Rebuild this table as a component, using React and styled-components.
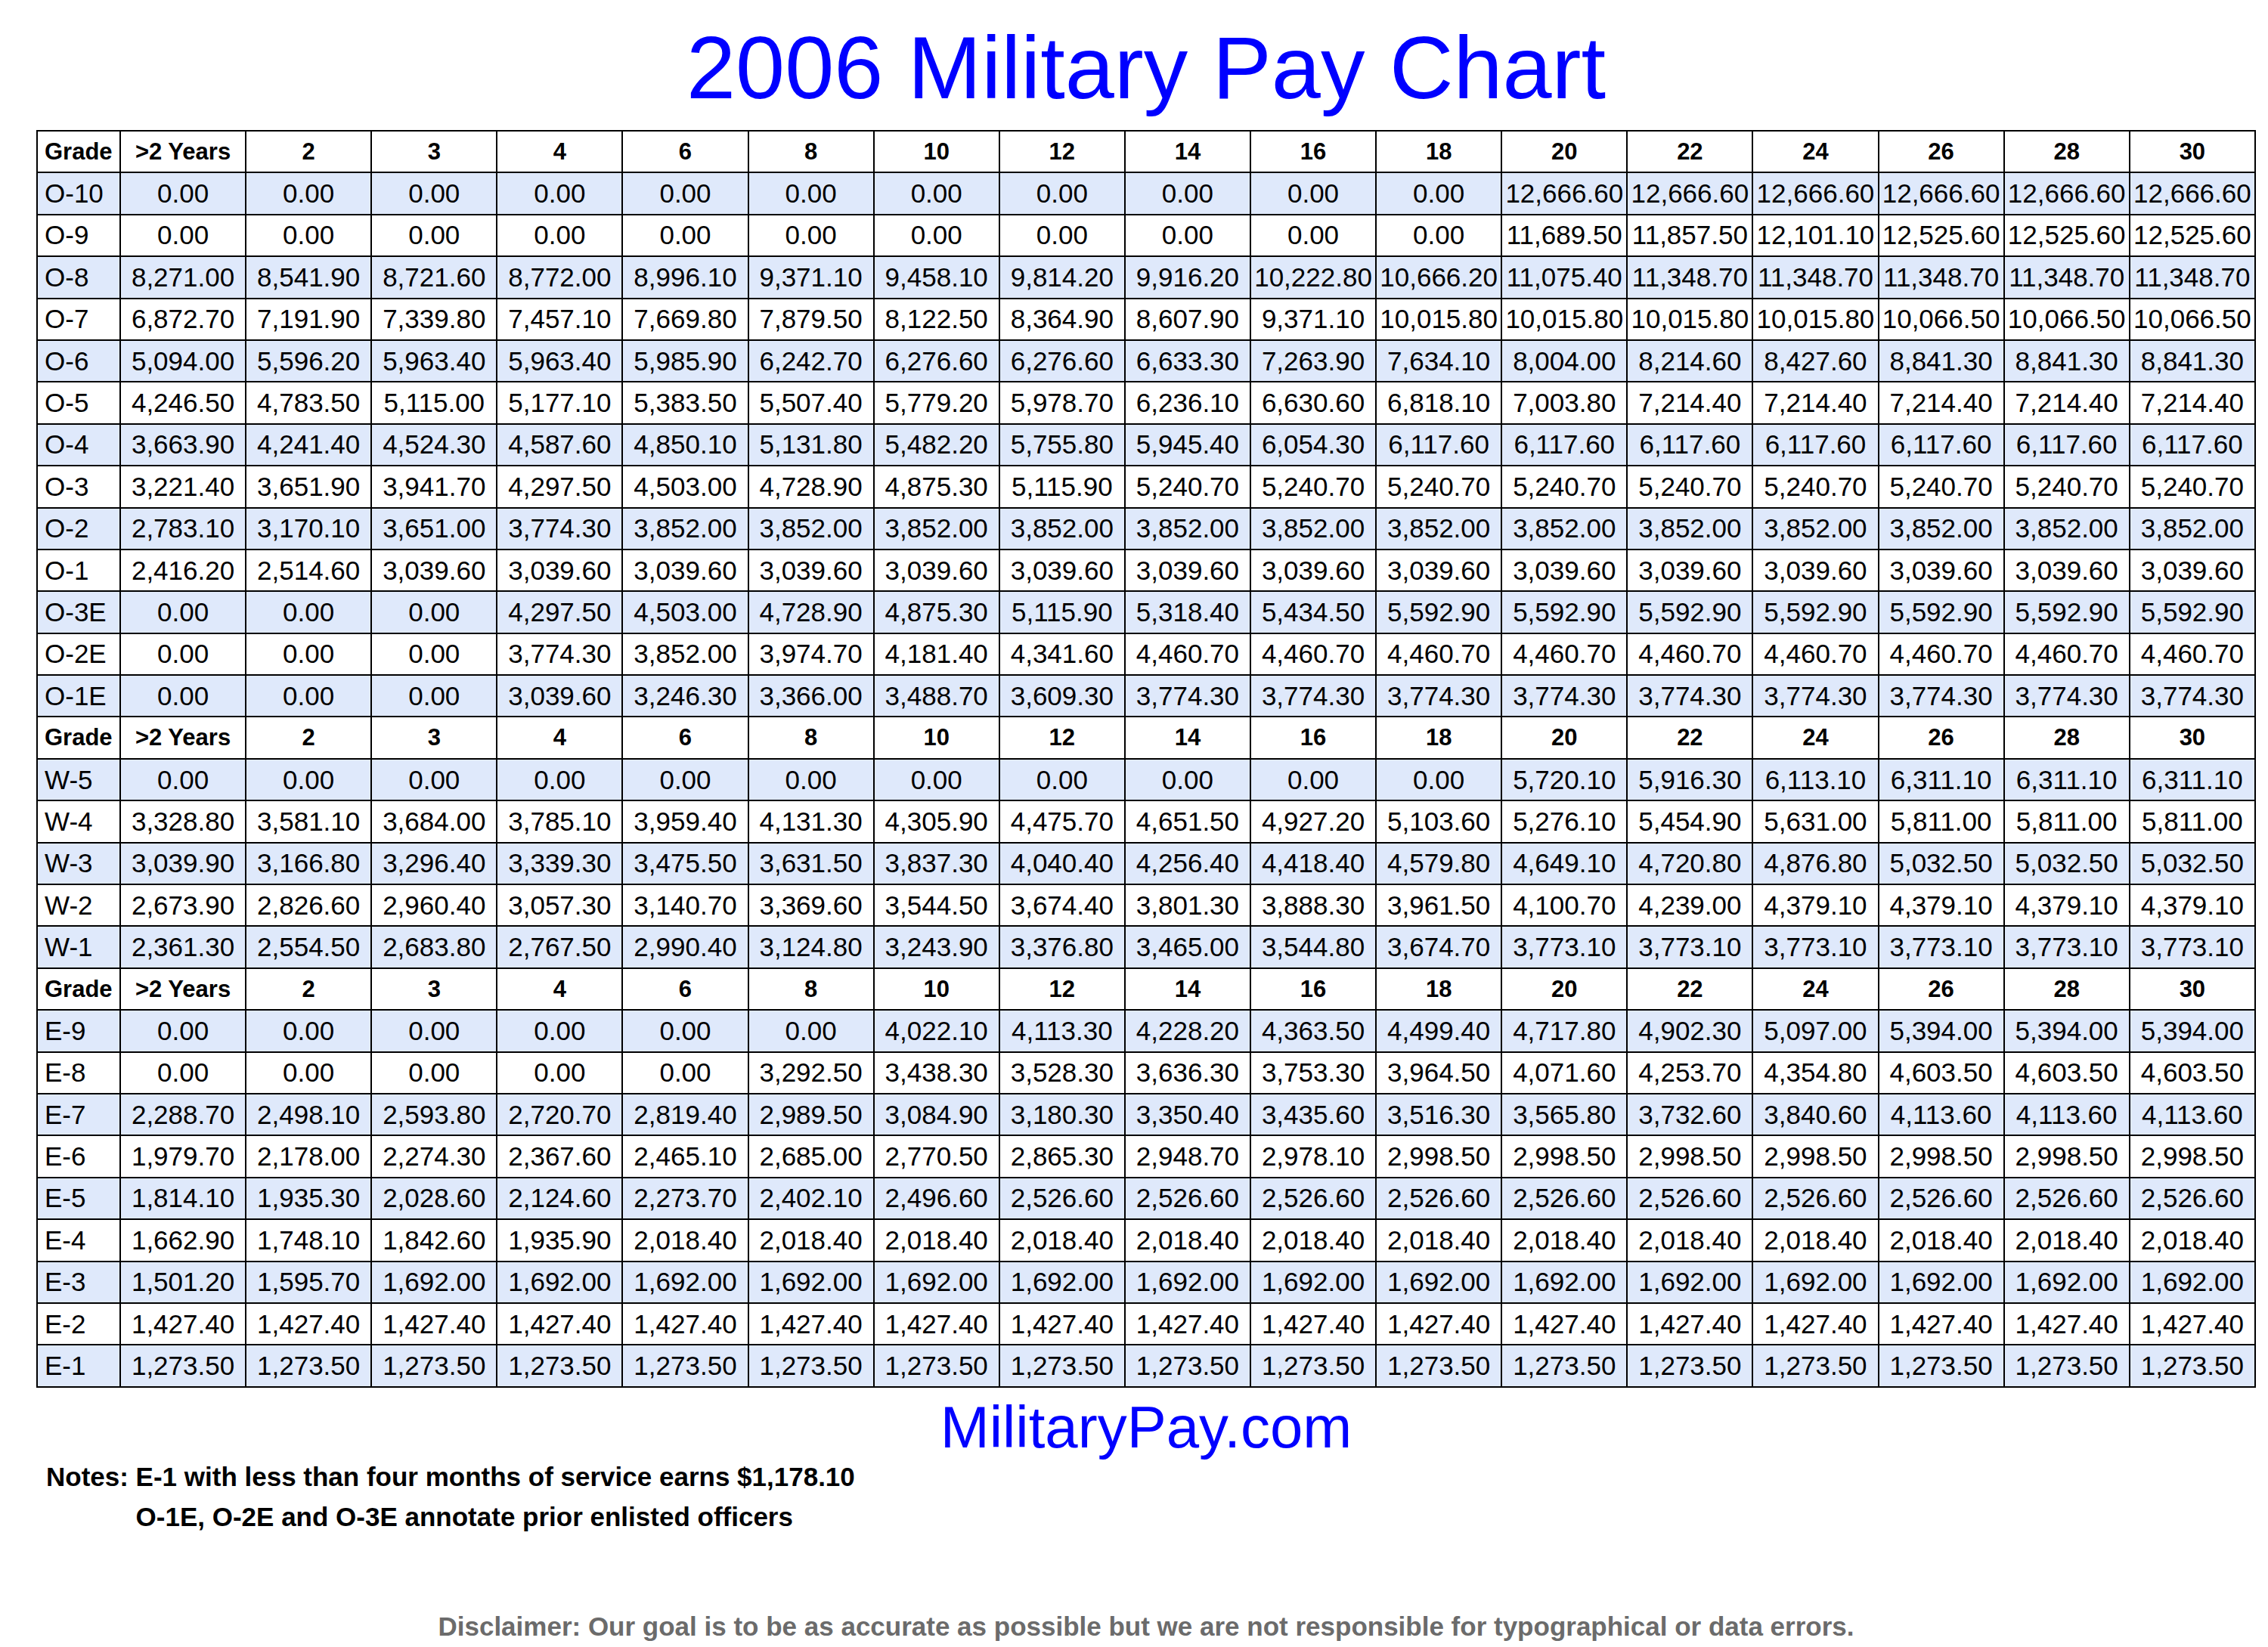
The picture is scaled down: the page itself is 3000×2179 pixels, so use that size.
import styled, { createGlobalStyle } from 'styled-components';

const GlobalStyle = createGlobalStyle`
  body {
    margin: 0;
    background: #ffffff;
    font-family: "Liberation Sans", Arial, sans-serif;
    color: #000000;
  }
`;

const Page = styled.div`
  width: 2936px;
  margin-left: 48px;
  display: flex;
  flex-direction: column;
`;

const Title = styled.h1`
  margin: 31px 0 0;
  font-size: 117px;
  line-height: 117px;
  font-weight: 400;
  color: #0000ff;
  text-align: center;
`;

const Chart = styled.table`
  margin-top: 24px;
  width: 100%;
  table-layout: fixed;
  border-collapse: collapse;
  border: 2px solid #000;
`;

const GradeCol = styled.col`
  width: 110px;
`;

const Cell = styled.td`
  height: 53.4px;
  padding: 0 2px;
  border: 2px solid #000;
  white-space: nowrap;
  vertical-align: middle;
  text-align: ${({ $left }) => ($left ? 'left' : 'center')};
  padding-left: ${({ $left }) => ($left ? '9px' : '2px')};
  font-size: ${({ $head }) => ($head ? '31px' : '35px')};
  font-weight: ${({ $head }) => ($head ? 700 : 400)};
  background: ${({ $shaded }) => ($shaded ? '#dfe9fb' : '#ffffff')};
`;

const Site = styled.div`
  margin-top: 13px;
  font-size: 78px;
  line-height: 78px;
  color: #0000ff;
  text-align: center;
`;

const Notes = styled.div`
  margin-top: 0;
  padding-left: 13px;
  display: flex;
  gap: 9.7px;
  font-size: 35px;
  line-height: 53px;
  font-weight: 700;
`;

const NoteLines = styled.div`
  display: flex;
  flex-direction: column;
`;

const Disclaimer = styled.div`
  margin-top: 99px;
  font-size: 35px;
  line-height: 40px;
  font-weight: 700;
  color: #6b6b6b;
  text-align: center;
`;

const YEARS = ['>2 Years', '2', '3', '4', '6', '8', '10', '12', '14', '16', '18', '20', '22', '24', '26', '28', '30'];

const rep = (v, n) => Array(n).fill(v);

const groups = [
  [
    ['O-10', [...rep('0.00', 11), ...rep('12,666.60', 6)]],
    ['O-9', [...rep('0.00', 11), '11,689.50', '11,857.50', '12,101.10', ...rep('12,525.60', 3)]],
    ['O-8', ['8,271.00', '8,541.90', '8,721.60', '8,772.00', '8,996.10', '9,371.10', '9,458.10', '9,814.20', '9,916.20', '10,222.80', '10,666.20', '11,075.40', ...rep('11,348.70', 5)]],
    ['O-7', ['6,872.70', '7,191.90', '7,339.80', '7,457.10', '7,669.80', '7,879.50', '8,122.50', '8,364.90', '8,607.90', '9,371.10', ...rep('10,015.80', 4), ...rep('10,066.50', 3)]],
    ['O-6', ['5,094.00', '5,596.20', '5,963.40', '5,963.40', '5,985.90', '6,242.70', '6,276.60', '6,276.60', '6,633.30', '7,263.90', '7,634.10', '8,004.00', '8,214.60', '8,427.60', ...rep('8,841.30', 3)]],
    ['O-5', ['4,246.50', '4,783.50', '5,115.00', '5,177.10', '5,383.50', '5,507.40', '5,779.20', '5,978.70', '6,236.10', '6,630.60', '6,818.10', '7,003.80', ...rep('7,214.40', 5)]],
    ['O-4', ['3,663.90', '4,241.40', '4,524.30', '4,587.60', '4,850.10', '5,131.80', '5,482.20', '5,755.80', '5,945.40', '6,054.30', ...rep('6,117.60', 7)]],
    ['O-3', ['3,221.40', '3,651.90', '3,941.70', '4,297.50', '4,503.00', '4,728.90', '4,875.30', '5,115.90', ...rep('5,240.70', 9)]],
    ['O-2', ['2,783.10', '3,170.10', '3,651.00', '3,774.30', ...rep('3,852.00', 13)]],
    ['O-1', ['2,416.20', '2,514.60', ...rep('3,039.60', 15)]],
    ['O-3E', [...rep('0.00', 3), '4,297.50', '4,503.00', '4,728.90', '4,875.30', '5,115.90', '5,318.40', '5,434.50', ...rep('5,592.90', 7)]],
    ['O-2E', [...rep('0.00', 3), '3,774.30', '3,852.00', '3,974.70', '4,181.40', '4,341.60', ...rep('4,460.70', 9)]],
    ['O-1E', [...rep('0.00', 3), '3,039.60', '3,246.30', '3,366.00', '3,488.70', '3,609.30', ...rep('3,774.30', 9)]],
  ],
  [
    ['W-5', [...rep('0.00', 11), '5,720.10', '5,916.30', '6,113.10', ...rep('6,311.10', 3)]],
    ['W-4', ['3,328.80', '3,581.10', '3,684.00', '3,785.10', '3,959.40', '4,131.30', '4,305.90', '4,475.70', '4,651.50', '4,927.20', '5,103.60', '5,276.10', '5,454.90', '5,631.00', ...rep('5,811.00', 3)]],
    ['W-3', ['3,039.90', '3,166.80', '3,296.40', '3,339.30', '3,475.50', '3,631.50', '3,837.30', '4,040.40', '4,256.40', '4,418.40', '4,579.80', '4,649.10', '4,720.80', '4,876.80', ...rep('5,032.50', 3)]],
    ['W-2', ['2,673.90', '2,826.60', '2,960.40', '3,057.30', '3,140.70', '3,369.60', '3,544.50', '3,674.40', '3,801.30', '3,888.30', '3,961.50', '4,100.70', '4,239.00', ...rep('4,379.10', 4)]],
    ['W-1', ['2,361.30', '2,554.50', '2,683.80', '2,767.50', '2,990.40', '3,124.80', '3,243.90', '3,376.80', '3,465.00', '3,544.80', '3,674.70', ...rep('3,773.10', 6)]],
  ],
  [
    ['E-9', [...rep('0.00', 6), '4,022.10', '4,113.30', '4,228.20', '4,363.50', '4,499.40', '4,717.80', '4,902.30', '5,097.00', ...rep('5,394.00', 3)]],
    ['E-8', [...rep('0.00', 5), '3,292.50', '3,438.30', '3,528.30', '3,636.30', '3,753.30', '3,964.50', '4,071.60', '4,253.70', '4,354.80', ...rep('4,603.50', 3)]],
    ['E-7', ['2,288.70', '2,498.10', '2,593.80', '2,720.70', '2,819.40', '2,989.50', '3,084.90', '3,180.30', '3,350.40', '3,435.60', '3,516.30', '3,565.80', '3,732.60', '3,840.60', ...rep('4,113.60', 3)]],
    ['E-6', ['1,979.70', '2,178.00', '2,274.30', '2,367.60', '2,465.10', '2,685.00', '2,770.50', '2,865.30', '2,948.70', '2,978.10', ...rep('2,998.50', 7)]],
    ['E-5', ['1,814.10', '1,935.30', '2,028.60', '2,124.60', '2,273.70', '2,402.10', '2,496.60', ...rep('2,526.60', 10)]],
    ['E-4', ['1,662.90', '1,748.10', '1,842.60', '1,935.90', ...rep('2,018.40', 13)]],
    ['E-3', ['1,501.20', '1,595.70', ...rep('1,692.00', 15)]],
    ['E-2', rep('1,427.40', 17)],
    ['E-1', rep('1,273.50', 17)],
  ],
];

function HeaderRow() {
  return (
    <tr>
      <Cell $head $left>Grade</Cell>
      {YEARS.map((y) => (
        <Cell $head key={y}>{y}</Cell>
      ))}
    </tr>
  );
}

function PayRow({ grade, values, shaded }) {
  return (
    <tr>
      <Cell $left $shaded={shaded}>{grade}</Cell>
      {values.map((v, i) => (
        <Cell $shaded={shaded} key={i}>{v}</Cell>
      ))}
    </tr>
  );
}

export default function App() {
  return (
    <>
      <GlobalStyle />
      <Page>
        <Title>2006 Military Pay Chart</Title>
        <Chart>
          <colgroup>
            <GradeCol />
            {YEARS.map((y) => (
              <col key={y} />
            ))}
          </colgroup>
          <tbody>
            {groups.map((rows, g) => [
              <HeaderRow key={`h${g}`} />,
              ...rows.map(([grade, values], i) => (
                <PayRow key={grade} grade={grade} values={values} shaded={i % 2 === 0} />
              )),
            ])}
          </tbody>
        </Chart>
        <Site>MilitaryPay.com</Site>
        <Notes>
          <span>Notes:</span>
          <NoteLines>
            <span>E-1 with less than four months of service earns $1,178.10</span>
            <span>O-1E, O-2E and O-3E annotate prior enlisted officers</span>
          </NoteLines>
        </Notes>
        <Disclaimer>
          Disclaimer: Our goal is to be as accurate as possible but we are not responsible for typographical or data errors.
        </Disclaimer>
      </Page>
    </>
  );
}
